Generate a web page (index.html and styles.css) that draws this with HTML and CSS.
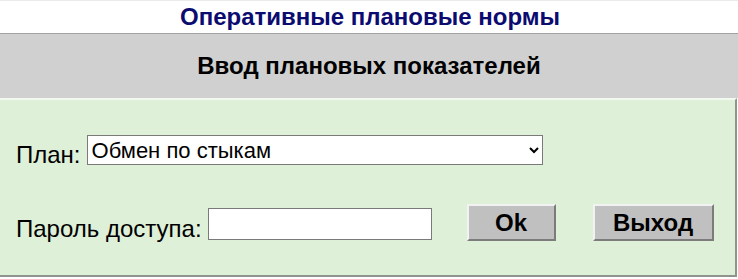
FILE: index.html
```html
<!DOCTYPE html>
<html lang="ru">
<head>
<meta charset="utf-8">
<title>Оперативные плановые нормы</title>
<link rel="stylesheet" href="styles.css">
</head>
<body>
<div class="page">
  <div class="top">Оперативные плановые нормы</div>
  <div class="band">Ввод плановых показателей</div>
  <form class="form">
    <div class="row row-plan">
      <label class="lbl" for="plan">План:</label>
      <select id="plan" class="sel">
        <option>Обмен по стыкам</option>
      </select>
    </div>
    <div class="row row-pass">
      <label class="lbl" for="pass">Пароль доступа:</label>
      <input id="pass" class="inp" type="password">
      <button type="button" class="btn btn-ok">Ok</button>
      <button type="button" class="btn btn-exit">Выход</button>
    </div>
  </form>
</div>
</body>
</html>
```
FILE: styles.css
```css
html, body {
  margin: 0;
  padding: 0;
  background: #ffffff;
}
body {
  font-family: "Liberation Sans", Arial, sans-serif;
  width: 738px;
  height: 279px;
  overflow: hidden;
}
.page {
  display: flex;
  flex-direction: column;
}
.top {
  height: 32px;
  border-top: 1px solid #ebebeb;
  display: flex;
  align-items: center;
  justify-content: center;
  color: #0b0b70;
  font-weight: bold;
  font-size: 24px;
  line-height: 1;
  padding-left: 2px;
}
.band {
  height: 64px;
  border-top: 1px solid #a3a3a3;
  background: #d0d0d0;
  display: flex;
  align-items: center;
  justify-content: center;
  color: #000;
  font-weight: bold;
  font-size: 24px;
  line-height: 1;
}
.form {
  margin: 0 1px 0 0;
  height: 175px;
  background: #dff0d8;
  border-top: 2px solid #f3f8f1;
  border-right: 2px solid #8f948e;
  border-bottom: 2px solid #8f948e;
  padding: 0 0 0 16px;
  display: flex;
  flex-direction: column;
}
.row {
  display: flex;
  align-items: center;
}
.row-plan {
  margin-top: 35px;
  height: 30px;
}
.row-pass {
  margin-top: 39px;
  height: 37px;
}
.lbl {
  font-size: 24px;
  line-height: 1;
  color: #000;
}
.row-plan .lbl {
  margin-top: 10px;
  margin-right: 6px;
}
.row-pass .lbl {
  margin-top: 12px;
  margin-right: 6px;
}
.sel {
  width: 456px;
  height: 30px;
  font-family: "Liberation Sans", Arial, sans-serif;
  font-size: 22px;
  color: #000;
  background: #fff;
  border: 1px solid #7a7a7a;
  border-radius: 0;
  padding: 0;
  margin: 0;
}
.inp {
  width: 224px;
  height: 32px;
  box-sizing: border-box;
  border: 1px solid #7a7a7a;
  background: #fff;
  margin: 2px 0 0 0;
  padding: 0 4px;
  font-size: 20px;
}
.btn {
  height: 37px;
  box-sizing: border-box;
  background: #c0c0c0;
  border: 2px solid;
  border-color: #f2f2f2 #7c7c7c #7c7c7c #f2f2f2;
  font-family: "Liberation Sans", Arial, sans-serif;
  font-weight: bold;
  font-size: 24px;
  line-height: 1;
  color: #000;
  padding: 0;
  margin: 0;
}
.btn-ok {
  width: 89px;
  margin-left: 35px;
}
.btn-exit {
  width: 121px;
  margin-left: 37px;
}
```
